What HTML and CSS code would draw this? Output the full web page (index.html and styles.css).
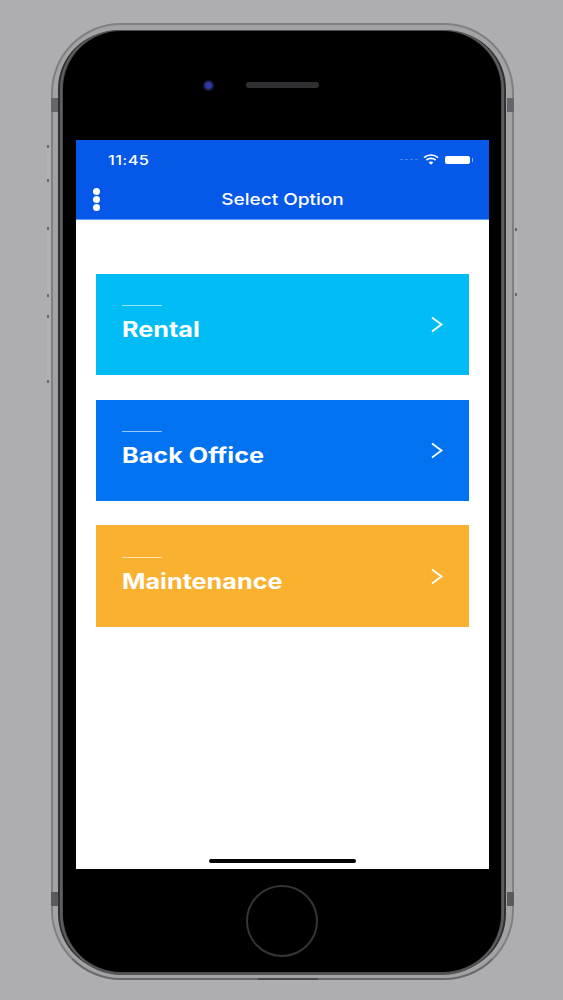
FILE: index.html
```html
<!DOCTYPE html>
<html lang="en">
<head>
<meta charset="utf-8">
<title>Select Option</title>
<link rel="stylesheet" href="styles.css">
</head>
<body>
<div class="phone">
  <span class="btn btn-mute"></span>
  <span class="btn btn-up"></span>
  <span class="btn btn-down"></span>
  <span class="btn btn-power"></span>
  <span class="band band-tl"></span>
  <span class="band band-tr"></span>
  <span class="band band-bl"></span>
  <span class="band band-br"></span>
  <span class="bottom-port"></span>
  <div class="bezel">
    <div class="top">
      <span class="camera"></span>
      <span class="speaker"></span>
    </div>
    <main class="screen">
      <header class="appbar">
        <div class="status">
          <span class="time">11:45</span>
          <div class="status-icons">
            <span class="signal"><i></i><i></i><i></i><i></i></span>
            <svg class="wifi" width="16" height="11" viewBox="0 0 16 11"><path d="M1 3.6C5 .1 11 .1 15 3.6" fill="none" stroke="#fff" stroke-width="1.7"/><path d="M3.4 6C6 3.9 10 3.9 12.6 6" fill="none" stroke="#fff" stroke-width="1.7"/><path d="M8 10.8 5.6 8.2C7 7.2 9 7.2 10.4 8.2Z" fill="#fff"/></svg>
            <span class="battery"></span>
          </div>
        </div>
        <div class="nav">
          <span class="dots"><i></i><i></i><i></i></span>
          <span class="nav-title">Select Option</span>
        </div>
      </header>
      <section class="cards">
        <a class="card card-rental">
          <div class="card-text"><span class="rule"></span><span class="card-title">Rental</span></div>
          <svg class="chev" width="14" height="19" viewBox="0 0 14 19"><path d="M2 2.5l9.5 7L2 16.5" fill="none" stroke="#fff" stroke-width="1.8"/></svg>
        </a>
        <a class="card card-office">
          <div class="card-text"><span class="rule"></span><span class="card-title">Back Office</span></div>
          <svg class="chev" width="14" height="19" viewBox="0 0 14 19"><path d="M2 2.5l9.5 7L2 16.5" fill="none" stroke="#fff" stroke-width="1.8"/></svg>
        </a>
        <a class="card card-maint">
          <div class="card-text"><span class="rule"></span><span class="card-title">Maintenance</span></div>
          <svg class="chev" width="14" height="19" viewBox="0 0 14 19"><path d="M2 2.5l9.5 7L2 16.5" fill="none" stroke="#fff" stroke-width="1.8"/></svg>
        </a>
      </section>
      <span class="home-bar"></span>
    </main>
    <div class="bottom"><span class="home-btn"></span></div>
  </div>
</div>
</body>
</html>
```
FILE: styles.css
```css
* { box-sizing: border-box; }
html, body { margin: 0; height: 1000px; overflow: hidden; }
body {
  background: #aeadaf;
  padding: 23px 0 0 51px;
  font-family: Inter, "Liberation Sans", sans-serif;
}
.phone {
  position: relative;
  width: 463px;
  height: 957px;
  border-radius: 70px;
  background: #a3a3a5;
  border: 2px solid #808082;
  border-bottom-color: #69696b;
  padding: 6px 11px 6px 10px;
}
.bezel {
  position: relative;
  height: 100%;
  background: #000;
  border-radius: 58px;
  box-shadow: 0 0 0 1px #4c4c4e, -2px 0 0 1px #5f5f61, 2px 0 0 1px #5f5f61, -5px 0 0 0 #303032, 5px 0 0 0 #303032, 0 2px 0 1px #555557;
  display: flex;
  flex-direction: column;
  padding: 0 12px 0 13px;
}
.top { height: 109px; flex: none; position: relative; }
.camera {
  position: absolute;
  left: 127px;
  top: 49px;
  width: 11px;
  height: 11px;
  border-radius: 50%;
  background: radial-gradient(circle, #2a3aa8 0 35%, #16182e 60%, #0a0a0e 100%);
}
.speaker {
  position: absolute;
  left: 170px;
  top: 51px;
  width: 73px;
  height: 6px;
  border-radius: 3px;
  background: #303032;
}
.screen {
  position: relative;
  flex: none;
  height: 729px;
  background: #fff;
  display: flex;
  flex-direction: column;
}
.appbar {
  height: 80px;
  background: #0558e8;
  border-bottom: 1px solid #5ea0f5;
  color: #fff;
  flex: none;
}
.status {
  height: 40px;
  padding: 0 16px 1px 32px;
  display: flex;
  align-items: center;
  justify-content: space-between;
}
.time {
  display: inline-block;
  font-size: 13px;
  font-weight: 500;
  letter-spacing: 0.3px;
  transform: scaleX(1.26);
  transform-origin: left center;
}
.status-icons { display: flex; align-items: center; gap: 6px; }
.signal { display: flex; gap: 2px; margin-right: -1px; opacity: .7; }
.signal i { width: 3px; height: 1.5px; background: #5f93ea; }
.battery {
  position: relative;
  width: 25px;
  height: 8px;
  background: #fff;
  border-radius: 2px;
  margin-right: 3px;
}
.battery::after {
  content: "";
  position: absolute;
  right: -3px;
  top: 2px;
  width: 1.5px;
  height: 4px;
  background: #8fb6f2;
}
.nav {
  position: relative;
  height: 39px;
  display: flex;
  align-items: center;
  justify-content: center;
  padding-bottom: 2px;
}
.nav-title {
  display: inline-block;
  font-size: 16px;
  font-weight: 500;
  transform: scaleX(1.19);
}
.dots {
  position: absolute;
  left: 17px;
  top: 8px;
  display: flex;
  flex-direction: column;
  gap: 0.8px;
}
.dots i { width: 7px; height: 7px; border-radius: 50%; background: #fff; }
.cards {
  padding: 54px 20px 0;
  display: flex;
  flex-direction: column;
  gap: 24.25px;
}
.card {
  height: 101.4px;
  color: #fff;
  display: flex;
  justify-content: space-between;
  padding: 31.3px 25px 0 26px;
}
.card-rental { background: #02bcf6; }
.card-office { background: #0273f0; }
.card-maint { background: #f9b12f; }
.card-text { display: flex; flex-direction: column; align-items: flex-start; }
.rule { width: 40px; height: 1px; background: rgba(255,255,255,.6); margin-bottom: 11px; }
.card-title {
  display: inline-block;
  font-size: 21px;
  font-weight: 700;
  line-height: 26px;
  white-space: nowrap;
  transform: scaleX(1.2);
  transform-origin: left center;
}
.chev { margin-top: 10px; }
.home-bar {
  position: absolute;
  left: 133px;
  bottom: 6px;
  width: 147px;
  height: 4px;
  border-radius: 2px;
  background: #000;
}
.bottom { flex: 1; display: flex; align-items: center; justify-content: center; }
.home-btn {
  width: 72px;
  height: 72px;
  border-radius: 50%;
  border: 2px solid #353537;
  margin-right: 1px;
}
.btn {
  position: absolute;
  width: 2px;
  background: #b4b4b6;
  border-top: 3px solid #66666a;
  border-bottom: 3px solid #66666a;
}
.btn-mute { left: -6px; top: 120px; height: 37px; }
.btn-up { left: -6px; top: 202px; height: 70px; }
.btn-down { left: -6px; top: 290px; height: 68px; }
.btn-power { right: -5px; top: 203px; height: 68px; }
.band { position: absolute; width: 7px; height: 14px; background: #66666a; }
.band-tl { left: -2px; top: 73px; }
.band-tr { right: -2px; top: 73px; }
.band-bl { left: -2px; top: 867px; background: #5a5a5c; }
.band-br { right: -2px; top: 867px; background: #5a5a5c; }
.bottom-port {
  position: absolute;
  left: 205px;
  bottom: -2px;
  width: 60px;
  height: 2px;
  background: #4a4a4c;
}
```
